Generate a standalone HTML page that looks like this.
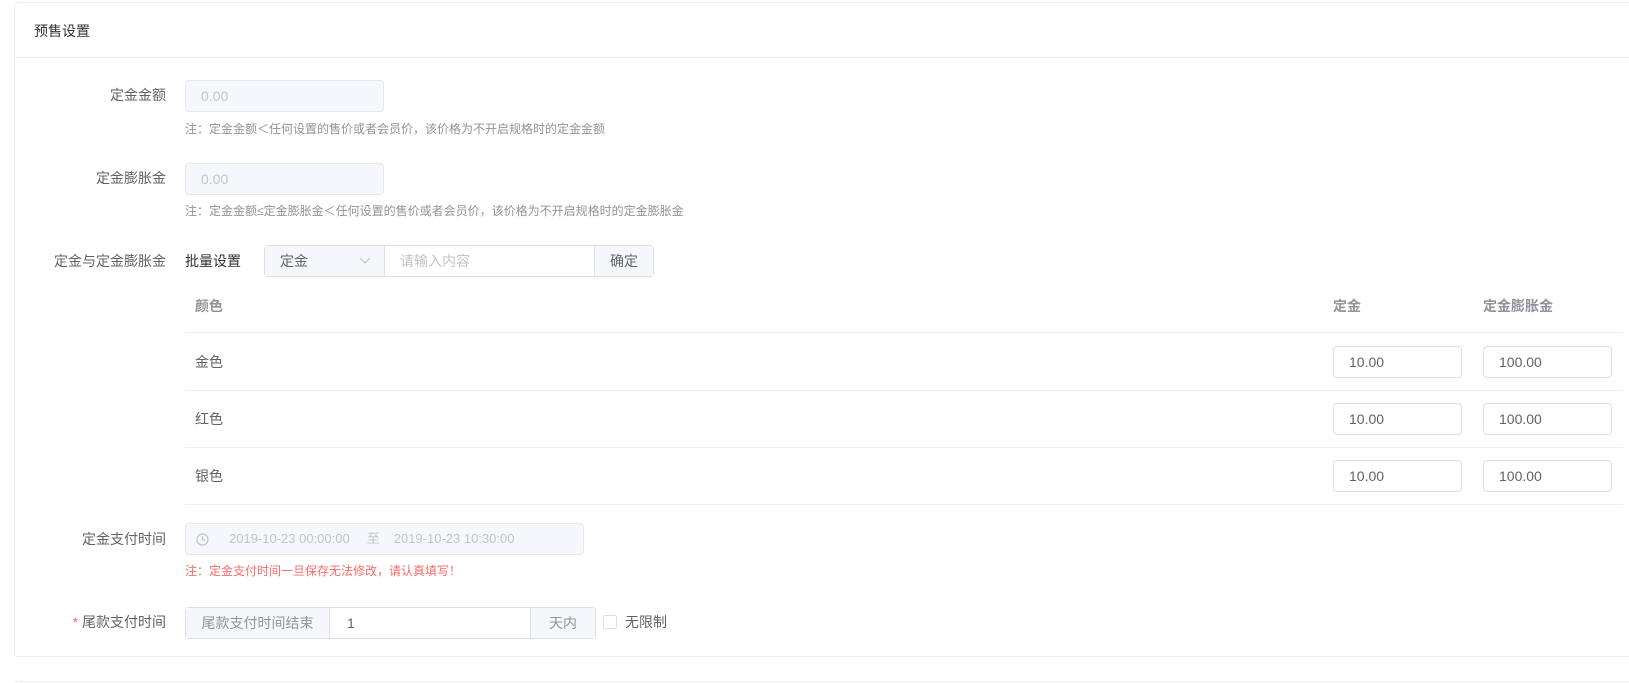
<!DOCTYPE html>
<html><head><meta charset="utf-8"><style>
*{box-sizing:border-box;margin:0;padding:0}
html,body{width:1629px;height:683px;overflow:hidden}
body{background:#fff;font-family:"Liberation Sans","Noto Sans CJK SC",sans-serif;color:#606266;position:relative}
.abs{position:absolute}
.card{left:14px;top:2px;width:1640px;height:655px;border:1px solid #ebeef5;border-radius:4px}
.card2{left:14px;top:681px;width:1640px;height:10px;border:1px solid #ebeef5;border-radius:4px}
.hl{height:1px;background:#ebeef5}
.lbl{font-size:14px;color:#606266;text-align:right;width:160px;left:6px;line-height:20px}
.inp{border:1px solid #dcdfe6;border-radius:4px;font-size:14px;line-height:30px;padding-left:15px}
.dis{background:#f5f7fa;border-color:#e4e7ed;color:#c0c4cc}
.hint{font-size:12px;color:#909399;left:185px;line-height:16px}
.th{font-size:14px;color:#909399;font-weight:bold;line-height:20px}
.td{font-size:14px;color:#606266;line-height:20px}
.ci{width:129px;height:32px;color:#606266;background:#fff}
</style></head><body>
<div class="abs card"></div>
<div class="abs card2"></div>
<div class="abs" style="left:34px;top:21px;font-size:14px;color:#303133;line-height:20px">预售设置</div>
<div class="abs hl" style="left:15px;top:57px;width:1614px"></div>

<div class="abs lbl" style="top:85px">定金金额</div>
<div class="abs inp dis" style="left:185px;top:80px;width:199px;height:32px">0.00</div>
<div class="abs hint" style="top:121px">注：定金金额＜任何设置的售价或者会员价，该价格为不开启规格时的定金金额</div>

<div class="abs lbl" style="top:168px">定金膨胀金</div>
<div class="abs inp dis" style="left:185px;top:163px;width:199px;height:32px">0.00</div>
<div class="abs hint" style="top:203px">注：定金金额≤定金膨胀金＜任何设置的售价或者会员价，该价格为不开启规格时的定金膨胀金</div>

<div class="abs lbl" style="top:251px">定金与定金膨胀金</div>
<div class="abs" style="left:185px;top:251px;font-size:14px;color:#303133;line-height:20px">批量设置</div>
<div class="abs inp" style="left:264px;top:245px;width:390px;height:32px;padding:0"></div>
<div class="abs" style="left:265px;top:246px;width:120px;height:30px;background:#f5f7fa;border-right:1px solid #dcdfe6;font-size:14px;color:#606266;line-height:30px;padding-left:15px">定金</div>
<svg class="abs" style="left:359px;top:256px" width="12" height="10"><path d="M1 2 L6 7 L11 2" stroke="#c0c4cc" stroke-width="1.2" fill="none"/></svg>
<div class="abs" style="left:400px;top:246px;font-size:14px;color:#c0c4cc;line-height:30px">请输入内容</div>
<div class="abs" style="left:594px;top:246px;width:59px;height:30px;background:#f5f7fa;border-left:1px solid #dcdfe6;font-size:14px;color:#606266;line-height:30px;text-align:center">确定</div>

<div class="abs th" style="left:195px;top:296px">颜色</div>
<div class="abs th" style="left:1333px;top:296px">定金</div>
<div class="abs th" style="left:1483px;top:296px">定金膨胀金</div>
<div class="abs hl" style="left:185px;top:332px;width:1438px"></div>
<div class="abs td" style="left:195px;top:352px">金色</div>
<div class="abs inp ci" style="left:1333px;top:346px">10.00</div>
<div class="abs inp ci" style="left:1483px;top:346px">100.00</div>
<div class="abs hl" style="left:185px;top:390px;width:1438px"></div>
<div class="abs td" style="left:195px;top:409px">红色</div>
<div class="abs inp ci" style="left:1333px;top:403px">10.00</div>
<div class="abs inp ci" style="left:1483px;top:403px">100.00</div>
<div class="abs hl" style="left:185px;top:447px;width:1438px"></div>
<div class="abs td" style="left:195px;top:466px">银色</div>
<div class="abs inp ci" style="left:1333px;top:460px">10.00</div>
<div class="abs inp ci" style="left:1483px;top:460px">100.00</div>
<div class="abs hl" style="left:185px;top:504px;width:1438px"></div>

<div class="abs lbl" style="top:529px">定金支付时间</div>
<div class="abs inp dis" style="left:185px;top:523px;width:399px;height:32px;padding-left:43px;font-size:13px">2019-10-23 00:00:00<span style="margin:0 14px 0 17px">至</span>2019-10-23 10:30:00</div>
<svg class="abs" style="left:196px;top:533px" width="13" height="13"><circle cx="6.5" cy="6.5" r="5.5" stroke="#c0c4cc" stroke-width="1.2" fill="none"/><path d="M6.5 3.5 V6.8 H9" stroke="#c0c4cc" stroke-width="1.2" fill="none"/></svg>
<div class="abs hint" style="top:563px;color:#f56c6c">注：定金支付时间一旦保存无法修改，请认真填写！</div>

<div class="abs lbl" style="top:612px"><span style="color:#f56c6c">* </span>尾款支付时间</div>
<div class="abs inp" style="left:185px;top:607px;width:411px;height:32px;padding:0"></div>
<div class="abs" style="left:186px;top:608px;width:144px;height:30px;background:#f5f7fa;border-right:1px solid #dcdfe6;font-size:14px;color:#909399;line-height:30px;text-align:center">尾款支付时间结束</div>
<div class="abs" style="left:347px;top:608px;font-size:14px;color:#606266;line-height:30px">1</div>
<div class="abs" style="left:530px;top:608px;width:65px;height:30px;background:#f5f7fa;border-left:1px solid #dcdfe6;font-size:14px;color:#909399;line-height:30px;text-align:center">天内</div>
<div class="abs" style="left:603px;top:615px;width:14px;height:14px;border:1px solid #dcdfe6;border-radius:2px"></div>
<div class="abs" style="left:625px;top:612px;font-size:14px;color:#606266;line-height:20px">无限制</div>
</body></html>
